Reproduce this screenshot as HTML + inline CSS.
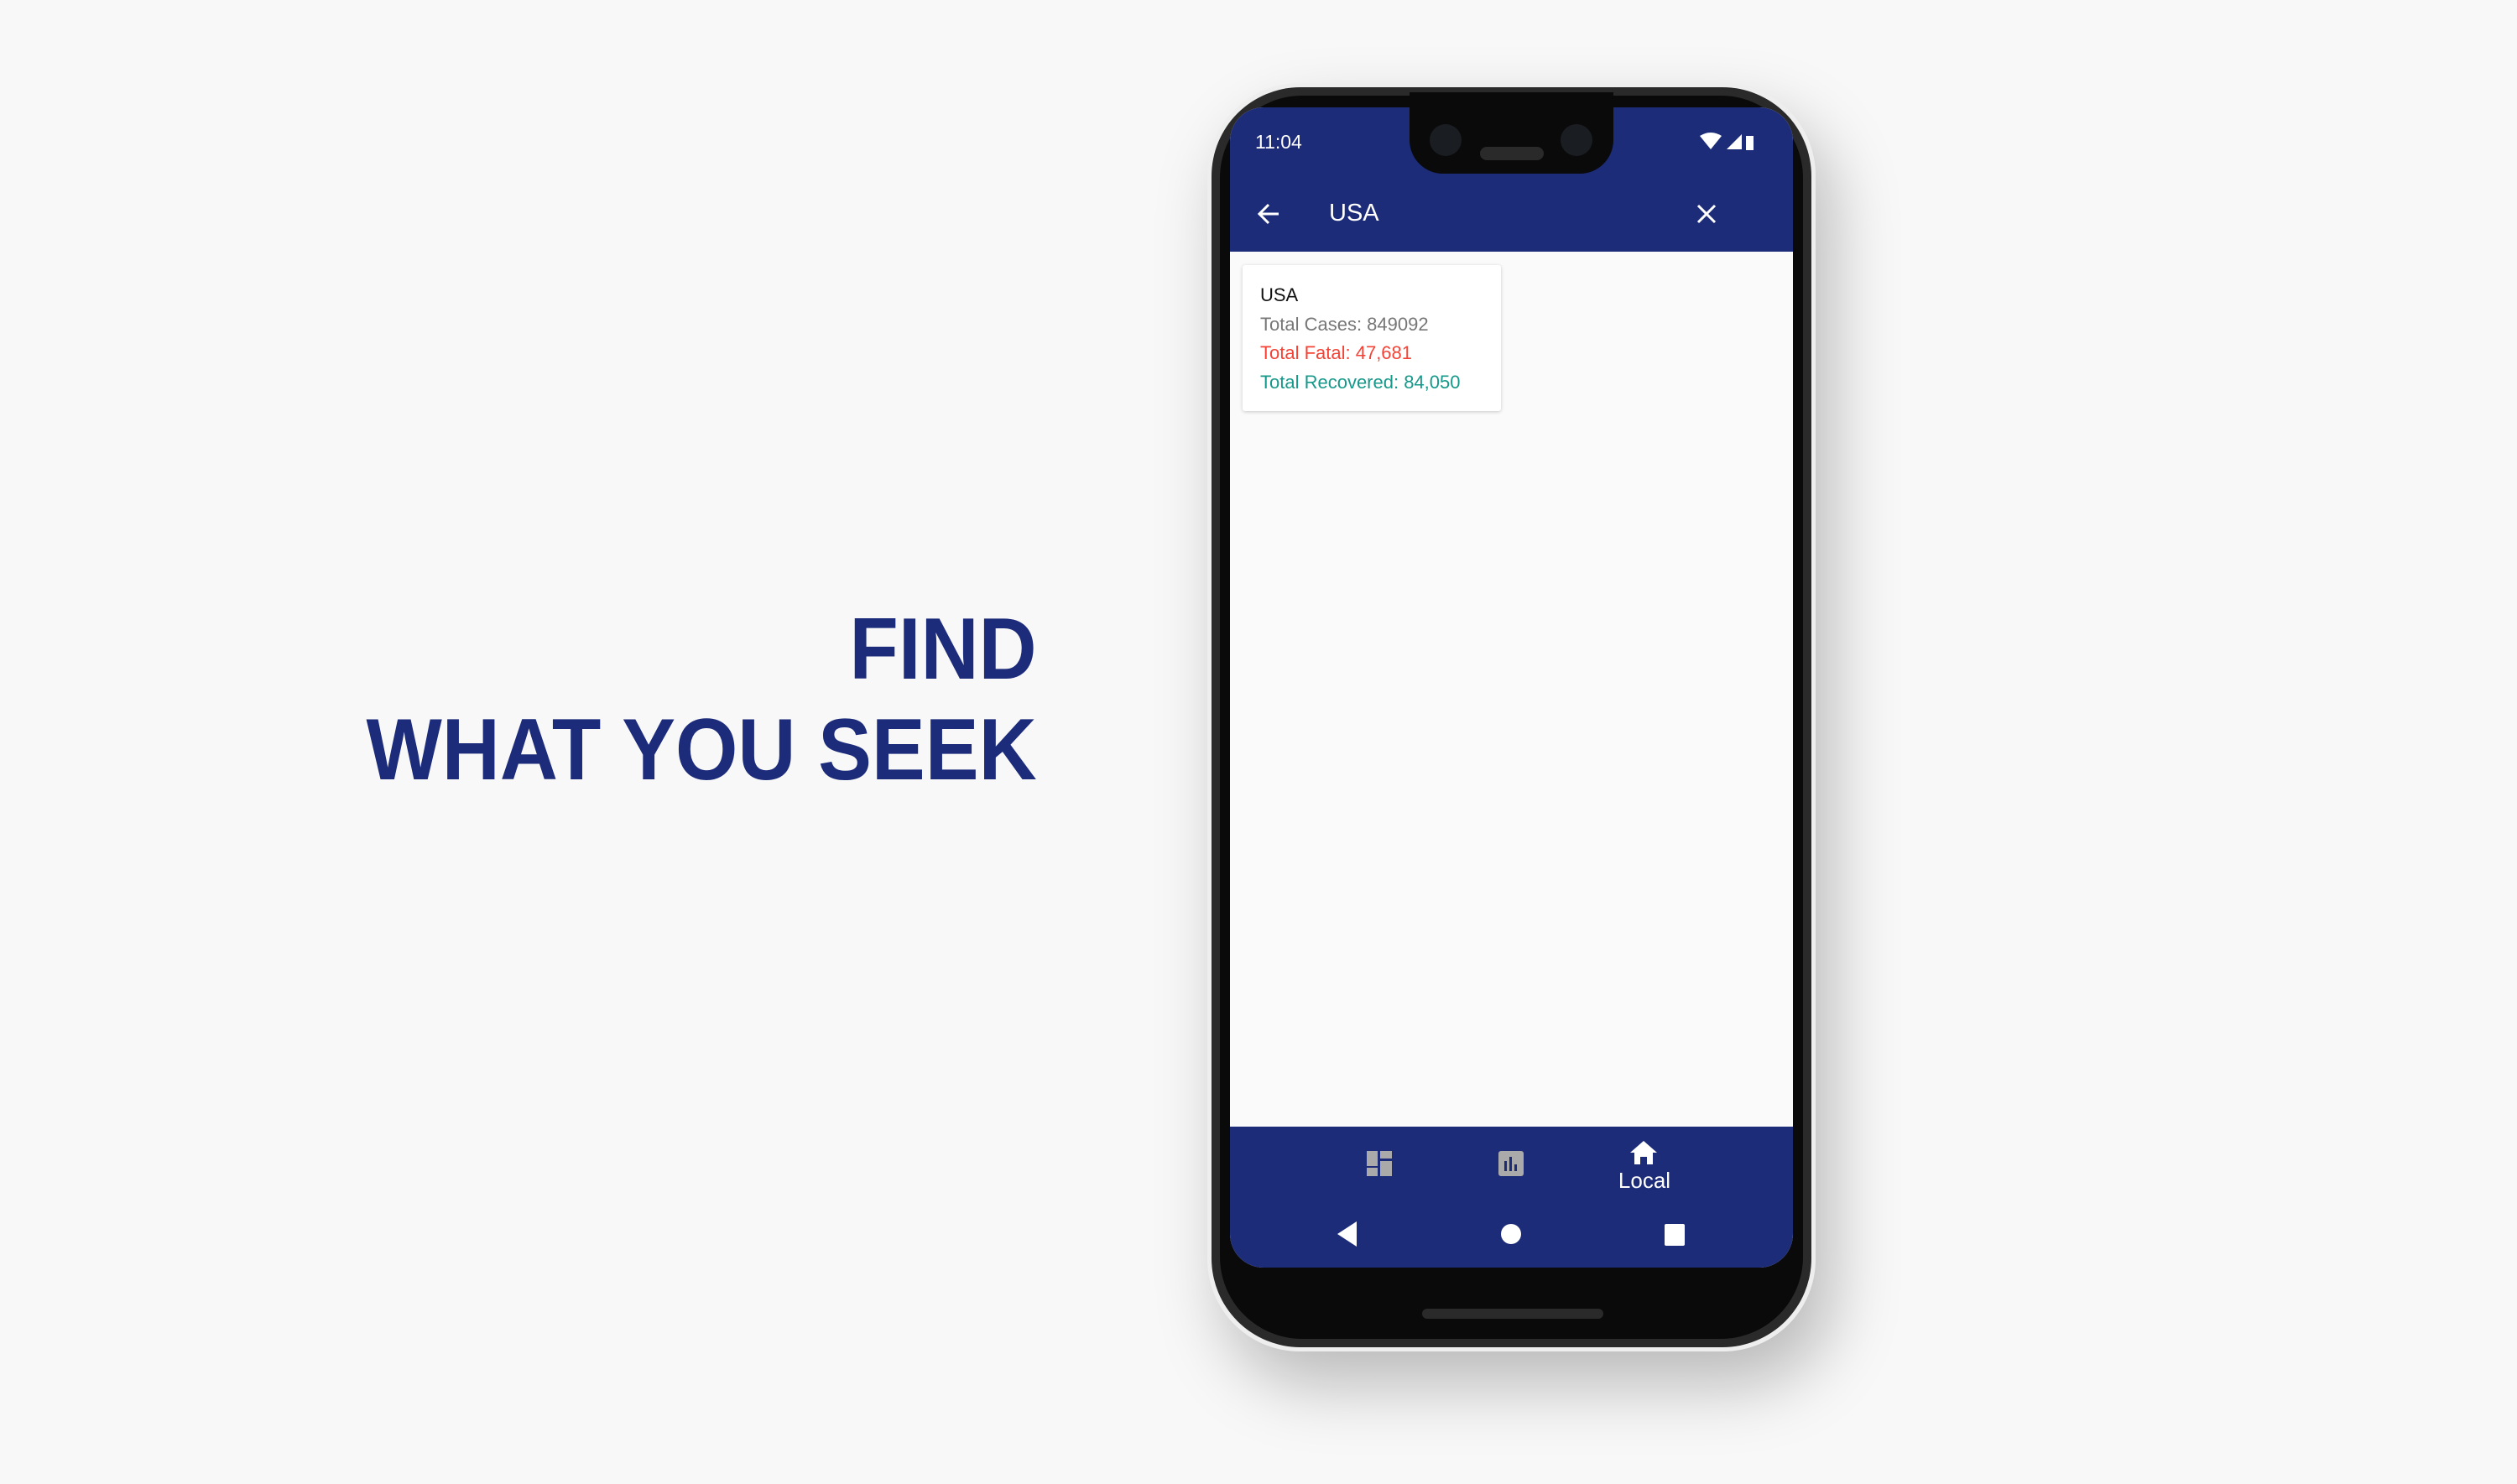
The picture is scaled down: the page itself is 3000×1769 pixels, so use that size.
<!DOCTYPE html><html><head><style>
body{margin:0;width:3000px;height:1769px;background:#f8f8f8;position:relative;overflow:hidden;font-family:"Liberation Sans",sans-serif}
.a{position:absolute}
.h{color:#1c2b7a;font-weight:bold;font-size:104px;right:1764px;text-align:right;line-height:1;white-space:nowrap;transform:scaleX(0.92);transform-origin:right center}
</style></head><body>
<div class="a h" style="top:722px">FIND</div>
<div class="a h" style="top:842px">WHAT YOU SEEK</div>
<div class="a" style="left:1439px;top:99px;width:725px;height:1512px;border-radius:110px;background:#eee;box-shadow:20px 40px 80px rgba(0,0,0,.25)"></div>
<div class="a" style="left:1444px;top:104px;width:715px;height:1502px;border-radius:106px;background:#2a2a2a"></div>
<div class="a" style="left:1454px;top:114px;width:695px;height:1482px;border-radius:98px;background:#0a0a0a"></div>
<div class="a" style="left:1466px;top:128px;width:671px;height:1383px;border-radius:40px;background:#fafafa;overflow:hidden">
 <div class="a" style="left:0;top:0;width:671px;height:172px;background:#1c2c78"></div>
 <div class="a" style="left:0;top:1215px;width:671px;height:168px;background:#1c2c78"></div>
</div>
<div class="a" style="left:1680px;top:110px;width:243px;height:97px;background:#0a0a0a;border-radius:0 0 40px 40px"></div>
<div class="a" style="left:1704px;top:148px;width:38px;height:38px;border-radius:50%;background:#1a1d22"></div>
<div class="a" style="left:1860px;top:148px;width:38px;height:38px;border-radius:50%;background:#1a1d22"></div>
<div class="a" style="left:1764px;top:175px;width:76px;height:16px;border-radius:8px;background:#2a2a2a"></div>
<div class="a" style="left:1496px;top:156px;color:#fff;font-size:23px">11:04</div>
<svg class="a" style="left:2026px;top:158px" width="64" height="24"><path d="M0 4 Q13 -4 26 4 L13 20Z" fill="#fff"/><path d="M32 20 L50 2 L50 20Z" fill="#fff"/><rect x="55" y="4" width="12" height="17" fill="#fff"/></svg>
<svg class="a" style="left:1497px;top:240px" width="30" height="30"><path d="M27 15H4M15 4 4 15 15 26" stroke="#fff" stroke-width="3" fill="none"/></svg>
<div class="a" style="left:1584px;top:238px;color:#fff;font-size:29px">USA</div>
<svg class="a" style="left:2022px;top:243px" width="24" height="24"><path d="M2 2 22 22M22 2 2 22" stroke="#fff" stroke-width="3"/></svg>
<div class="a" style="left:1481px;top:316px;width:308px;height:174px;background:#fff;box-shadow:0 1px 4px rgba(0,0,0,.2);border-radius:3px;font-size:22px;line-height:34.5px">
 <div style="padding:19px 0 0 21px"><div style="color:#111">USA</div><div style="color:#777">Total Cases: 849092</div><div style="color:#f44336">Total Fatal: 47,681</div><div style="color:#16998a">Total Recovered: 84,050</div></div>
</div>
<svg class="a" style="left:1629px;top:1372px" width="30" height="30"><rect x="0" y="0" width="13" height="18" fill="#aaa"/><rect x="16" y="0" width="14" height="9" fill="#aaa"/><rect x="0" y="20" width="13" height="10" fill="#aaa"/><rect x="16" y="12" width="14" height="18" fill="#aaa"/></svg>
<svg class="a" style="left:1786px;top:1372px" width="30" height="30"><rect width="30" height="30" rx="3" fill="#aaa"/><rect x="7" y="12" width="3" height="12" fill="#1c2c78"/><rect x="13" y="7" width="3" height="17" fill="#1c2c78"/><rect x="19" y="16" width="3" height="8" fill="#1c2c78"/></svg>
<svg class="a" style="left:1943px;top:1360px" width="32" height="28"><path d="M16 0 32 14H27V28H20V19H12V28H5V14H0Z" fill="#fff"/></svg>
<div class="a" style="left:1925px;top:1392px;width:70px;text-align:center;color:#fff;font-size:26px">Local</div>
<svg class="a" style="left:1594px;top:1456px" width="24" height="30"><path d="M23 0V30L0 15Z" fill="#fff"/></svg>
<div class="a" style="left:1789px;top:1459px;width:24px;height:24px;border-radius:50%;background:#fff"></div>
<div class="a" style="left:1984px;top:1459px;width:24px;height:26px;border-radius:2px;background:#fff"></div>
<div class="a" style="left:1695px;top:1560px;width:216px;height:12px;border-radius:6px;background:#2a2a2a"></div>
</body></html>
